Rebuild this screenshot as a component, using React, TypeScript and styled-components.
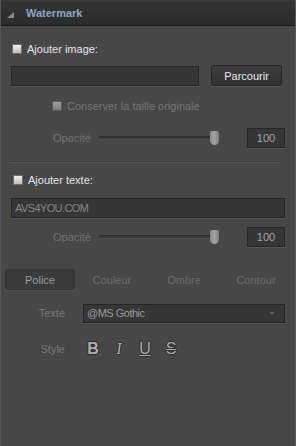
import styled, { createGlobalStyle } from "styled-components";

const GlobalStyle = createGlobalStyle`
  html, body {
    margin: 0;
    padding: 0;
    background: #474747;
  }
  body {
    font-family: "Liberation Sans", Arial, sans-serif;
    font-size: 11px;
  }
`;

const Panel = styled.div`
  width: 296px;
  height: 446px;
  box-sizing: border-box;
  background: #474747;
  border-left: 1px solid #555;
  border-right: 1px solid #585858;
  display: flex;
  flex-direction: column;
`;

const Header = styled.div`
  height: 26px;
  box-sizing: border-box;
  display: flex;
  align-items: center;
  gap: 12px;
  padding-left: 6px;
  background: linear-gradient(#343434, #2c2c2c);
  border-top: 1px solid #3c3c3c;
  border-bottom: 1px solid #1c1c1c;
`;

const Triangle = styled.span`
  width: 0;
  height: 0;
  border-left: 7px solid transparent;
  border-bottom: 6px solid #8a8a8a;
  margin-top: 3px;
`;

const Title = styled.span`
  color: #8ca6c6;
  font-weight: bold;
  font-size: 11px;
`;

const Body = styled.div`
  display: flex;
  flex-direction: column;
  padding: 13px 10px 0 10px;
`;

const Spacer = styled.div<{ $h: number }>`
  height: ${(p) => p.$h}px;
  flex: none;
`;

const CheckRow = styled.label<{ $indent?: number; $dim?: boolean }>`
  display: flex;
  align-items: center;
  gap: 5px;
  height: 20px;
  padding-left: ${(p) => p.$indent ?? 1}px;
  color: ${(p) => (p.$dim ? "#767676" : "#e6e6e6")};
  font-size: 11px;
`;

const Box = styled.span`
  width: 10px;
  height: 10px;
  box-sizing: border-box;
  background: linear-gradient(#f2f2f2, #bcbcbc);
  border: 1px solid #6e6e6e;
`;

const DimBox = styled(Box)`
  background: linear-gradient(#a0a0a0, #7c7c7c);
  border-color: #5c5c5c;
`;

const FileRow = styled.div`
  display: flex;
  align-items: center;
  justify-content: space-between;
  padding-right: 3px;
`;

const Field = styled.div<{ $w?: string }>`
  width: ${(p) => p.$w ?? "100%"};
  height: 20px;
  box-sizing: border-box;
  background: #363636;
  border: 1px solid #262626;
  box-shadow: 0 1px 0 #555;
  display: flex;
  align-items: center;
  padding: 0 3px;
  color: #858585;
  font-size: 11px;
  letter-spacing: -0.6px;
`;

const Button = styled.div`
  width: 71px;
  height: 21px;
  box-sizing: border-box;
  background: linear-gradient(#3d3d3d, #323232);
  border: 1px solid #252525;
  border-radius: 2px;
  box-shadow: 0 1px 0 #585858;
  color: #ececec;
  font-size: 11px;
  display: flex;
  align-items: center;
  justify-content: center;
`;

const SliderRow = styled.div`
  display: flex;
  align-items: center;
  height: 20px;
  padding-left: 42px;
`;

const SliderLabel = styled.span`
  color: #727272;
  font-size: 11px;
  width: 46px;
`;

const Track = styled.div`
  position: relative;
  width: 116px;
  height: 2px;
  background: #393939;
  border-top: 1px solid #303030;
  border-bottom: 1px solid #525252;
`;

const Thumb = styled.div`
  position: absolute;
  right: -4px;
  top: -6px;
  width: 9px;
  height: 14px;
  background: linear-gradient(90deg, #8a8a8a, #a2a2a2 50%, #7c7c7c);
  border-radius: 2px 2px 5px 5px;
`;

const NumBox = styled.div`
  margin-left: auto;
  width: 38px;
  height: 20px;
  box-sizing: border-box;
  background: #363636;
  border: 1px solid #262626;
  box-shadow: 0 1px 0 #555;
  color: #a4a4a4;
  font-size: 11px;
  display: flex;
  align-items: center;
  justify-content: center;
`;

const Divider = styled.div`
  height: 1px;
  background: #3a3a3a;
  border-bottom: 1px solid #555;
  margin-right: 4px;
`;

const Tabs = styled.div`
  display: grid;
  grid-template-columns: repeat(4, 72px);
  margin-left: -7px;
`;

const Tab = styled.div<{ $active?: boolean }>`
  height: 21px;
  box-sizing: border-box;
  margin: 0 1px;
  display: flex;
  align-items: center;
  justify-content: center;
  color: ${(p) => (p.$active ? "#9c9c9c" : "#6c6c6c")};
  font-size: 11px;
  border-radius: 3px;
  background: ${(p) => (p.$active ? "#3a3a3a" : "transparent")};
  border: 1px solid ${(p) => (p.$active ? "#333" : "transparent")};
  box-shadow: ${(p) => (p.$active ? "0 1px 0 #525252" : "none")};
`;

const FormRow = styled.div`
  display: grid;
  grid-template-columns: 55px 1fr;
  column-gap: 17px;
  align-items: center;
  min-height: 20px;
`;

const FormLabel = styled.span`
  color: #777;
  font-size: 11px;
  text-align: right;
  padding-right: 1px;
`;

const Select = styled(Field)`
  height: 19px;
  justify-content: space-between;
  color: #9a9a9a;
  letter-spacing: -0.5px;
`;

const Arrow = styled.span`
  width: 0;
  height: 0;
  border-left: 3px solid transparent;
  border-right: 3px solid transparent;
  border-top: 3px solid #626262;
  margin-right: 6px;
`;

const StyleButtons = styled.div`
  display: flex;
  align-items: center;
  gap: 14px;
  padding-left: 4px;
`;

const StyleGlyph = styled.span<{ $bold?: boolean; $italic?: boolean; $under?: boolean; $strike?: boolean }>`
  width: 12px;
  text-align: center;
  color: #b0b0b0;
  font-size: 16px;
  line-height: 16px;
  font-family: ${(p) => (p.$italic ? '"Liberation Serif", serif' : '"Liberation Sans", Arial, sans-serif')};
  font-weight: ${(p) => (p.$bold ? "bold" : "normal")};
  font-style: ${(p) => (p.$italic ? "italic" : "normal")};
  text-decoration: ${(p) => (p.$under ? "underline" : p.$strike ? "line-through" : "none")};
  text-shadow: -1px 0 0 #2a2a2a, 0 -1px 0 #2a2a2a, 1px 0 0 #2a2a2a, 0 1px 0 #2a2a2a;
`;

export default function App() {
  return (
    <Panel>
      <GlobalStyle />
      <Header>
        <Triangle />
        <Title>Watermark</Title>
      </Header>
      <Body>
        <CheckRow>
          <Box />
          Ajouter image:
        </CheckRow>
        <Spacer $h={6} />
        <FileRow>
          <Field $w="188px" />
          <Button>Parcourir</Button>
        </FileRow>
        <Spacer $h={10} />
        <CheckRow $indent={41} $dim>
          <DimBox />
          Conserver la taille originale
        </CheckRow>
        <Spacer $h={12} />
        <SliderRow>
          <SliderLabel>Opacité</SliderLabel>
          <Track>
            <Thumb />
          </Track>
          <NumBox>100</NumBox>
        </SliderRow>
        <Spacer $h={13} />
        <Divider />
        <Spacer $h={7} />
        <CheckRow $indent={2}>
          <Box />
          Ajouter texte:
        </CheckRow>
        <Spacer $h={8} />
        <Field>AVS4YOU.COM</Field>
        <Spacer $h={9} />
        <SliderRow>
          <SliderLabel>Opacité</SliderLabel>
          <Track>
            <Thumb />
          </Track>
          <NumBox>100</NumBox>
        </SliderRow>
        <Spacer $h={22} />
        <Tabs>
          <Tab $active>Police</Tab>
          <Tab>Couleur</Tab>
          <Tab>Ombre</Tab>
          <Tab>Contour</Tab>
        </Tabs>
        <Spacer $h={13} />
        <FormRow>
          <FormLabel>Texte</FormLabel>
          <Select>
            @MS Gothic
            <Arrow />
          </Select>
        </FormRow>
        <Spacer $h={16} />
        <FormRow>
          <FormLabel>Style</FormLabel>
          <StyleButtons>
            <StyleGlyph $bold>B</StyleGlyph>
            <StyleGlyph $italic>I</StyleGlyph>
            <StyleGlyph $under>U</StyleGlyph>
            <StyleGlyph $strike>S</StyleGlyph>
          </StyleButtons>
        </FormRow>
      </Body>
    </Panel>
  );
}
